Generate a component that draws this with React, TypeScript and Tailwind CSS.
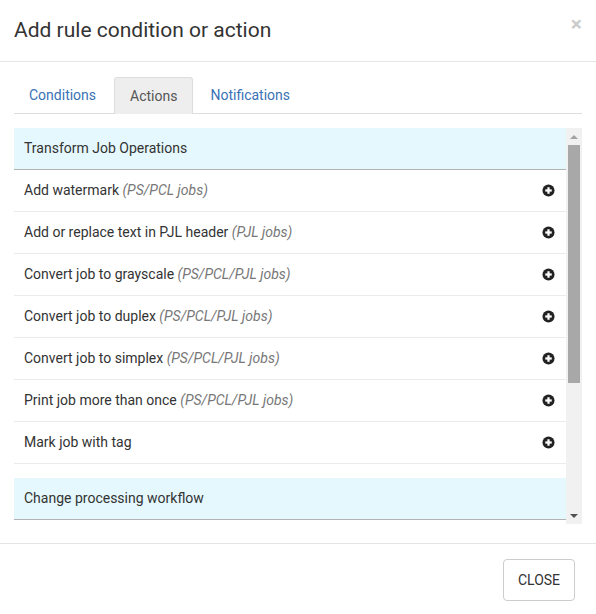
import React from "react";

type Item = { label: string; note?: string };

const group1: Item[] = [
  { label: "Add watermark", note: "(PS/PCL jobs)" },
  { label: "Add or replace text in PJL header", note: "(PJL jobs)" },
  { label: "Convert job to grayscale", note: "(PS/PCL/PJL jobs)" },
  { label: "Convert job to duplex", note: "(PS/PCL/PJL jobs)" },
  { label: "Convert job to simplex", note: "(PS/PCL/PJL jobs)" },
  { label: "Print job more than once", note: "(PS/PCL/PJL jobs)" },
  { label: "Mark job with tag" },
];

function PlusIcon() {
  return (
    <svg width="13" height="13" viewBox="0 0 14 14" className="shrink-0">
      <circle cx="7" cy="7" r="6.5" fill="#222" />
      <rect x="3.5" y="5.8" width="7" height="2.4" fill="#fff" />
      <rect x="5.8" y="3.5" width="2.4" height="7" fill="#fff" />
    </svg>
  );
}

function Group({ title, items, first }: { title: string; items: Item[]; first?: boolean }) {
  return (
    <div className={first ? "" : "mt-[14px]"}>
      <div className="h-[42px] flex items-center px-[10px] bg-[#e5f8fd] border-b border-[#b3b3b3] text-[14px] text-[#333]">
        {title}
      </div>
      {items.map((it) => (
        <div
          key={it.label}
          className="h-[42px] flex items-center justify-between pl-[10px] pr-[11px] border-b border-[#ebebeb] text-[14px] text-[#333]"
        >
          <span>
            {it.label}
            {it.note && <span className="italic text-[#777]"> {it.note}</span>}
          </span>
          <PlusIcon />
        </div>
      ))}
    </div>
  );
}

export default function App() {
  return (
    <div className="w-[596px] h-[614px] bg-white font-['Roboto',sans-serif] text-[#333] flex flex-col overflow-hidden">
      <div className="h-[62px] shrink-0 border-b border-[#e5e5e5] flex items-center justify-between pl-[14px] pr-[14px]">
        <h4 className="text-[21px] leading-none text-[#333]">Add rule condition or action</h4>
        <span className="text-[21px] font-bold leading-none text-black opacity-20 -mt-[12px]">×</span>
      </div>

      <div className="px-[14px] pt-[15px] pb-[19px]">
        <div className="flex border-b border-[#ddd] h-[37px]">
          <div className="h-[36px] px-[15px] flex items-center text-[14px] text-[#3a72b5] mr-[3px]">Conditions</div>
          <div className="h-[37px] px-[15px] flex items-center text-[14px] text-[#555] bg-[#eeeeee] border border-b-0 border-[#ddd] rounded-t-[3px] mr-[2px]">
            Actions
          </div>
          <div className="h-[36px] px-[15px] flex items-center text-[14px] text-[#3a72b5]">Notifications</div>
        </div>

        <div className="mt-[14px] h-[396px] flex">
          <div className="flex-1 overflow-hidden">
            <Group title="Transform Job Operations" items={group1} first />
            <Group title="Change processing workflow" items={[]} />
          </div>
          <div className="w-[16px] bg-[#f1f1f1] flex flex-col items-center">
            <div className="h-[17px] w-full flex items-center justify-center">
              <div className="w-0 h-0 border-l-[4px] border-r-[4px] border-b-[4px] border-l-transparent border-r-transparent border-b-[#a3a3a3]" />
            </div>
            <div className="w-[12px] h-[238px] bg-[#a8a8a8]" />
            <div className="flex-1" />
            <div className="h-[17px] w-full flex items-center justify-center">
              <div className="w-0 h-0 border-l-[4px] border-r-[4px] border-t-[4px] border-l-transparent border-r-transparent border-t-[#505050]" />
            </div>
          </div>
        </div>
      </div>

      <div className="border-t border-[#e5e5e5] pt-[15px] pr-[21px] flex justify-end">
        <button className="h-[42px] w-[72px] border border-[#ccc] rounded-[4px] bg-white text-[14px] text-[#333] flex items-center justify-center">
          CLOSE
        </button>
      </div>
    </div>
  );
}
